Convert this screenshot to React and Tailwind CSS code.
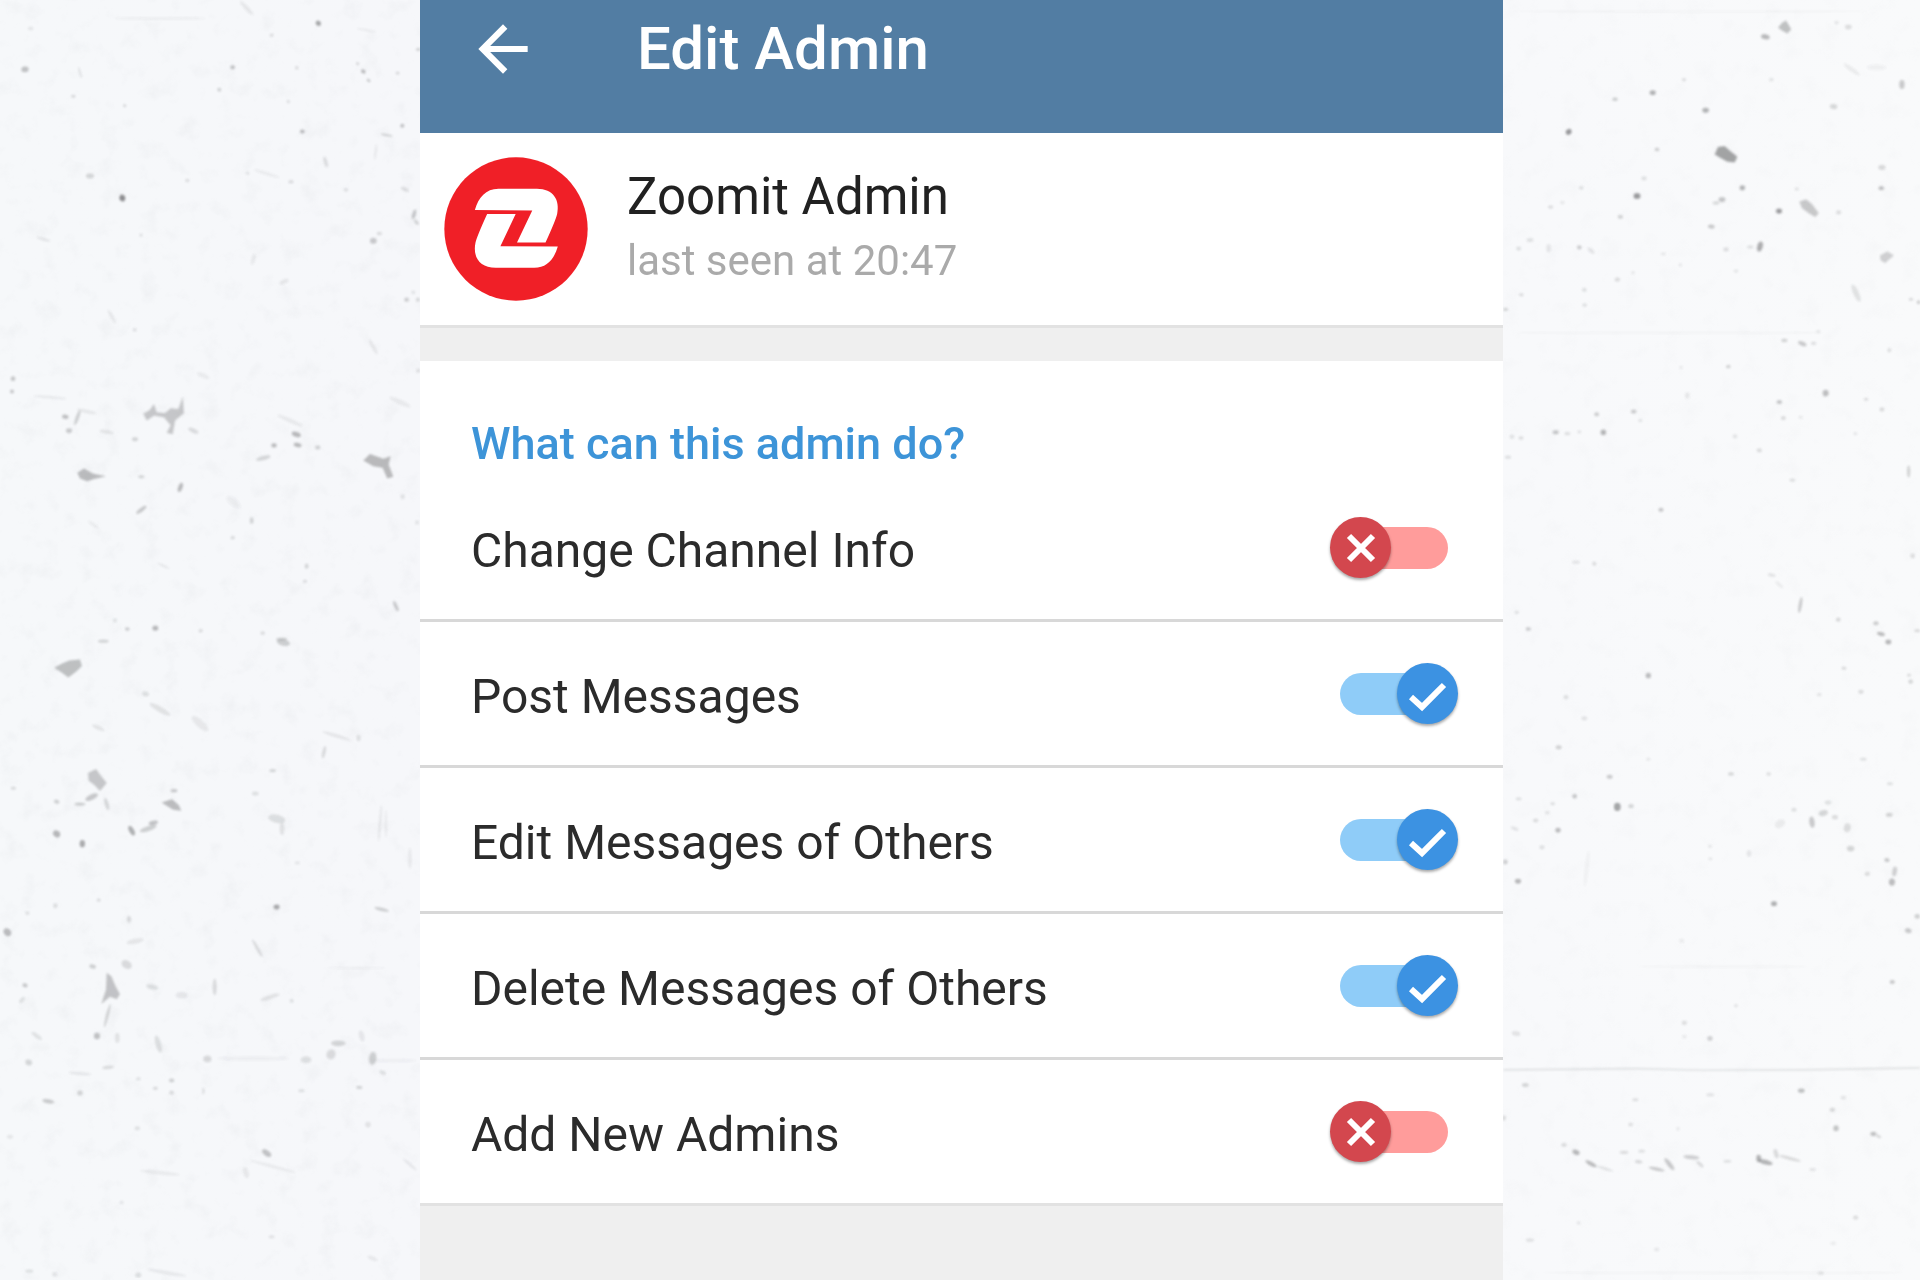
import { useState } from "react";

// Marks on the plaster wall, one list per quarter: [x, y, rx, ry, rotation, opacity]
const WALL = [
  {
    transform: "translate(0 0) scale(0.3333 0.4082)",
    marks: [
      [75, 170, 11, 7, -5, 0.45], [955, 57, 8, 6, 20, 0.7], [698, 165, 7, 5, 0, 0.45], [890, 166, 5, 4, 0, 0.25],
      [658, 220, 6, 5, 0, 0.3], [220, 236, 7, 4, 0, 0.25], [374, 259, 5, 4, 0, 0.25], [1090, 175, 7, 5, 20, 0.5],
      [1106, 197, 6, 4, 20, 0.35], [1193, 179, 6, 4, 0, 0.25], [1073, 156, 5, 4, 0, 0.25], [865, 249, 5, 4, 0, 0.2],
      [907, 322, 7, 5, 0, 0.5], [1207, 308, 6, 5, 0, 0.45], [1160, 331, 18, 3, 8, 0.3], [1255, 121, 7, 4, 0, 0.3],
      [270, 431, 12, 6, 0, 0.3], [367, 485, 9, 8, 20, 0.9], [562, 442, 6, 4, 0, 0.25], [873, 445, 8, 4, 0, 0.25],
      [743, 424, 5, 4, 0, 0.2], [977, 397, 5, 14, -20, 0.25], [1127, 372, 3, 20, 8, 0.15], [1038, 465, 6, 4, 0, 0.25],
      [1215, 464, 12, 4, 20, 0.25], [1242, 525, 5, 12, 20, 0.45], [1249, 544, 9, 4, 40, 0.35], [1120, 590, 10, 7, 0, 0.4],
      [1138, 572, 8, 4, 0, 0.25], [1220, 734, 7, 5, 0, 0.4], [1254, 734, 6, 5, 0, 0.3], [1240, 716, 6, 4, 0, 0.2],
      [423, 576, 5, 4, 0, 0.2], [130, 586, 22, 3, 12, 0.18], [335, 775, 4, 20, -35, 0.15], [404, 808, 5, 4, 0, 0.25],
      [760, 635, 6, 14, 20, 0.12], [852, 690, 14, 5, -20, 0.15], [1120, 850, 5, 22, -35, 0.15], [1255, 908, 5, 5, 0, 0.25],
      [39, 928, 7, 6, 0, 0.4], [36, 959, 6, 5, 0, 0.4], [196, 1021, 10, 5, 5, 0.5], [207, 1055, 9, 6, 0, 0.4],
      [232, 1023, 5, 20, 25, 0.35], [150, 973, 50, 3, 4, 0.14], [320, 1058, 22, 4, 8, 0.18], [260, 1008, 30, 4, 10, 0.15],
      [405, 1076, 9, 5, 0, 0.3], [424, 1168, 9, 4, 0, 0.3], [541, 1194, 6, 12, 25, 0.55], [424, 1249, 18, 5, -30, 0.4],
      [580, 1055, 16, 5, 20, 0.25], [822, 1091, 8, 5, 0, 0.55], [889, 1064, 14, 6, 15, 0.55], [893, 1090, 12, 5, 10, 0.55],
      [953, 1096, 8, 5, 0, 0.35], [790, 1122, 22, 5, -12, 0.3], [755, 1275, 5, 8, 0, 0.35], [698, 1317, 6, 4, 0, 0.3],
      [920, 1387, 6, 6, 0, 0.3], [915, 1424, 6, 4, 0, 0.25], [1188, 1485, 5, 14, -30, 0.4], [1251, 1280, 5, 5, 0, 0.2],
      [382, 1541, 7, 4, 0, 0.4], [466, 1539, 9, 6, 0, 0.55], [602, 1545, 6, 4, 0, 0.25], [345, 1520, 6, 5, 0, 0.2],
      [788, 1551, 7, 4, 0, 0.25], [845, 1566, 16, 4, 0, 0.3], [1208, 1217, 6, 6, 0, 0.2], [280, 1285, 18, 4, 30, 0.1],
      [490, 1386, 20, 3, 20, 0.13], [740, 20, 5, 26, -50, 0.15], [480, 45, 140, 2, 0, 0.13], [815, 86, 6, 4, 0, 0.25],
      [240, 178, 3, 14, -20, 0.18], [92, 70, 8, 5, 0, 0.15], [1100, 74, 30, 3, 8, 0.1], [800, 425, 40, 4, 14, 0.1],
      [610, 920, 20, 6, 20, 0.1], [870, 1030, 40, 5, 20, 0.12], [1200, 985, 34, 6, 20, 0.12], [700, 1230, 24, 10, 30, 0.08],
    ],
    stains: [
      ["M430 1013 L448 1005 L462 990 L470 1010 L495 1012 L512 1000 L535 1002 L548 972 L552 1012 L525 1030 L518 1064 L500 1060 L512 1042 L492 1022 L462 1018 L440 1030Z", 0.42],
      ["M232 1158 L252 1148 L278 1160 L318 1167 L280 1174 L262 1179 L240 1172Z", 0.5],
      ["M1090 1128 L1110 1112 L1150 1124 L1172 1118 L1166 1138 L1180 1168 L1162 1172 L1148 1146 L1120 1142Z", 0.52],
    ],
  },
  {
    transform: "translate(0 640) scale(0.3333 0.4082)",
    marks: [
      [310, 3, 16, 4, 0, 0.3], [850, 6, 20, 8, 10, 0.35], [480, 170, 34, 7, 25, 0.18], [600, 205, 30, 10, 35, 0.13],
      [437, 132, 10, 6, 10, 0.22], [295, 215, 20, 5, 20, 0.15], [1010, 235, 44, 4, 14, 0.15], [1076, 240, 6, 8, 0, 0.2],
      [972, 275, 5, 16, 15, 0.25], [40, 363, 8, 4, 0, 0.25], [170, 396, 8, 5, 10, 0.35], [240, 402, 16, 4, 0, 0.35],
      [275, 385, 20, 7, -20, 0.4], [320, 402, 5, 16, -20, 0.3], [522, 369, 10, 4, 0, 0.4], [395, 467, 7, 14, -35, 0.6],
      [445, 462, 26, 6, -15, 0.35], [460, 448, 14, 5, -10, 0.45], [170, 475, 11, 8, 20, 0.55], [247, 499, 8, 9, 0, 0.65],
      [818, 320, 10, 4, 0, 0.3], [766, 376, 10, 5, 0, 0.2], [830, 438, 26, 10, 10, 0.22], [846, 462, 7, 16, 0, 0.18],
      [1140, 450, 4, 44, 5, 0.13], [1158, 450, 4, 34, 0, 0.1], [1230, 535, 5, 26, 0, 0.12], [892, 546, 8, 4, 0, 0.15],
      [296, 637, 6, 4, 0, 0.25], [166, 651, 6, 6, 0, 0.25], [82, 669, 6, 4, 0, 0.25], [22, 716, 12, 9, 30, 0.5],
      [387, 684, 6, 8, 0, 0.25], [405, 738, 26, 6, -10, 0.15], [830, 654, 9, 6, 0, 0.65], [1145, 660, 22, 4, 12, 0.35],
      [772, 755, 4, 26, -35, 0.25], [644, 850, 6, 20, 0, 0.25], [380, 795, 16, 10, 20, 0.25], [278, 800, 10, 5, 10, 0.35],
      [75, 846, 8, 5, 10, 0.4], [66, 882, 10, 5, -40, 0.2], [457, 850, 18, 6, 10, 0.22], [545, 870, 18, 8, 0, 0.14],
      [810, 875, 30, 5, -15, 0.18], [875, 884, 6, 5, 0, 0.2], [322, 920, 4, 30, 18, 0.32], [291, 970, 9, 8, 0, 0.45],
      [352, 975, 7, 12, 0, 0.18], [475, 990, 8, 22, -20, 0.22], [110, 970, 18, 5, 30, 0.2], [86, 1035, 10, 7, 10, 0.3],
      [622, 1026, 12, 8, 0, 0.28], [918, 1028, 16, 8, 0, 0.22], [1015, 988, 22, 7, 0, 0.3], [993, 1015, 14, 12, -20, 0.25],
      [1118, 1025, 11, 16, 10, 0.35], [1085, 970, 8, 14, -20, 0.14], [1148, 1060, 10, 5, 20, 0.2], [240, 1062, 34, 4, 4, 0.14],
      [324, 1047, 18, 4, -5, 0.25], [145, 1130, 18, 5, 8, 0.4], [240, 1110, 8, 6, 0, 0.3], [415, 1075, 7, 4, 0, 0.2],
      [466, 1098, 7, 4, 0, 0.28], [515, 1079, 8, 5, 0, 0.35], [515, 1109, 7, 5, 0, 0.25], [610, 1105, 4, 8, 0, 0.18],
      [1078, 1096, 9, 4, 0, 0.3], [904, 1104, 9, 4, 0, 0.2], [412, 1196, 8, 5, 0, 0.2], [1104, 1187, 8, 7, 0, 0.18],
      [800, 1257, 15, 7, 28, 0.45], [30, 1217, 9, 5, 0, 0.15], [738, 1305, 8, 14, -20, 0.13], [365, 1378, 6, 4, 0, 0.16],
      [1230, 1285, 24, 4, 35, 0.14], [820, 1290, 70, 4, 12, 0.1], [480, 1305, 60, 5, 5, 0.1], [815, 1462, 9, 4, 0, 0.18],
      [88, 1546, 12, 4, 0, 0.22], [164, 1554, 8, 5, 0, 0.18], [415, 1556, 9, 6, 0, 0.22], [500, 1550, 60, 4, 8, 0.14],
      [1118, 1515, 16, 5, 20, 0.12], [1070, 803, 90, 2, 0, 0.08], [1180, 1030, 70, 4, 0, 0.08], [760, 1025, 110, 5, 0, 0.08],
    ],
    stains: [
      ["M163 68 L185 58 L208 50 L240 48 L246 64 L228 78 L205 92 L186 80Z", 0.48],
      ["M264 326 L288 316 L302 332 L320 350 L300 370 L284 356 L266 344Z", 0.42],
      ["M485 398 L516 390 L536 404 L544 418 L520 416 L500 406Z", 0.5],
      ["M320 815 L334 824 L348 850 L360 868 L350 880 L330 874 L304 892 L318 856Z", 0.44],
    ],
  },
  {
    transform: "translate(1490 0) scale(0.3333 0.4082)",
    marks: [
      [826, 90, 13, 6, 8, 0.55], [1075, 66, 10, 6, 0, 0.25], [1040, 55, 6, 4, 0, 0.18], [582, 195, 6, 4, 0, 0.25],
      [488, 227, 9, 6, 0, 0.6], [375, 243, 8, 5, 0, 0.35], [647, 270, 10, 6, 0, 0.6], [236, 323, 9, 7, -20, 0.8],
      [501, 366, 7, 4, 0, 0.4], [1031, 261, 11, 6, 8, 0.3], [1236, 207, 8, 11, 0, 0.4], [844, 195, 7, 4, 0, 0.2],
      [1176, 410, 11, 6, 0, 0.28], [1174, 461, 8, 5, 0, 0.5], [757, 460, 8, 6, 0, 0.6], [696, 489, 10, 6, 0, 0.45],
      [678, 497, 10, 4, 0, 0.3], [867, 517, 9, 6, 0, 0.8], [920, 463, 6, 4, 0, 0.2], [1046, 520, 8, 5, 0, 0.25],
      [462, 437, 8, 5, 0, 0.22], [441, 480, 10, 7, 0, 0.8], [391, 531, 8, 5, 0, 0.32], [274, 460, 7, 4, 0, 0.22],
      [182, 507, 8, 4, 0, 0.25], [217, 496, 7, 4, 0, 0.15], [664, 555, 10, 5, 5, 0.4], [810, 604, 8, 13, 20, 0.65],
      [781, 605, 10, 4, 0, 0.22], [708, 611, 8, 5, 0, 0.25], [268, 606, 7, 5, 0, 0.38], [120, 588, 10, 5, 0, 0.2],
      [86, 609, 7, 5, 0, 0.22], [176, 608, 7, 10, 0, 0.16], [303, 614, 12, 5, 35, 0.18], [520, 622, 8, 4, 0, 0.15],
      [1098, 718, 8, 24, -30, 0.2], [738, 664, 6, 4, 0, 0.2], [571, 649, 5, 4, 0, 0.16], [382, 685, 8, 5, 0, 0.26],
      [429, 668, 6, 4, 0, 0.15], [283, 710, 7, 5, 0, 0.22], [284, 747, 7, 4, 0, 0.22], [94, 722, 7, 4, 0, 0.24],
      [47, 758, 7, 4, 0, 0.35], [1263, 733, 6, 4, 0, 0.28], [1286, 740, 5, 5, 0, 0.4], [883, 834, 9, 4, 0, 0.35],
      [937, 842, 13, 5, 18, 0.42], [971, 841, 8, 4, 0, 0.25], [985, 812, 6, 3, 0, 0.2], [1198, 858, 6, 5, 0, 0.24],
      [715, 898, 7, 4, 0, 0.35], [573, 900, 5, 4, 0, 0.15], [1007, 963, 9, 8, -10, 0.5], [868, 985, 8, 5, 0, 0.45],
      [880, 1024, 7, 5, 0, 0.28], [932, 1022, 6, 4, 0, 0.15], [1128, 978, 6, 4, 0, 0.25], [1176, 1003, 7, 5, 0, 0.28],
      [592, 969, 7, 8, 0, 0.15], [431, 1008, 8, 5, 0, 0.4], [451, 1030, 6, 4, 0, 0.2], [320, 1015, 7, 5, 0, 0.4],
      [340, 1059, 8, 7, 0, 0.6], [197, 1059, 9, 5, 0, 0.45], [232, 1062, 9, 4, 0, 0.24], [268, 1058, 6, 4, 0, 0.18],
      [66, 1070, 7, 5, 0, 0.22], [93, 1073, 7, 4, 0, 0.26], [54, 1120, 9, 4, 0, 0.22], [735, 1069, 7, 5, 0, 0.2],
      [808, 1103, 8, 5, 0, 0.26], [1096, 1062, 6, 4, 0, 0.16], [1256, 1155, 5, 15, 0, 0.32], [907, 1176, 9, 4, 0, 0.22],
      [513, 1249, 8, 5, 0, 0.4], [1268, 1362, 7, 6, 0, 0.25], [258, 1377, 12, 4, 0, 0.18], [313, 1381, 6, 5, 0, 0.26],
      [845, 1409, 12, 4, 10, 0.18], [868, 1432, 14, 4, 35, 0.12], [931, 1482, 5, 20, 12, 0.38], [1045, 1518, 7, 5, 0, 0.28],
      [1158, 1527, 8, 5, 0, 0.38], [1173, 1553, 12, 5, 10, 0.5], [115, 1541, 8, 5, 0, 0.36], [80, 1500, 6, 4, 0, 0.2],
      [1282, 1545, 9, 4, 0, 0.25], [600, 28, 560, 2, 0, 0.06], [540, 815, 480, 2, 0, 0.07], [1085, 170, 28, 5, 30, 0.13],
      [1160, 165, 30, 7, 0, 0.08],
    ],
    stains: [
      ["M864 68 L876 56 L888 50 L904 72 L892 82 L878 76Z", 0.48],
      ["M674 378 L684 360 L704 358 L724 372 L742 384 L734 398 L712 396 L690 386Z", 0.72],
      ["M928 494 L948 488 L966 500 L986 522 L976 532 L956 522 L936 510Z", 0.42],
      ["M1170 626 L1192 616 L1212 626 L1196 636 L1186 644 L1172 638Z", 0.36],
    ],
  },
  {
    transform: "translate(1490 640) scale(0.3333 0.4082)",
    marks: [
      [1195, 5, 9, 6, 0, 0.55], [475, 87, 8, 7, 0, 0.5], [1062, 69, 7, 4, 0, 0.25], [1262, 102, 7, 5, 0, 0.3],
      [1257, 86, 6, 4, 0, 0.24], [1113, 127, 8, 5, 0, 0.25], [988, 134, 7, 4, 0, 0.18], [228, 140, 7, 5, 0, 0.22],
      [283, 192, 9, 5, 0, 0.18], [206, 263, 9, 5, 0, 0.32], [475, 292, 6, 4, 0, 0.15], [359, 335, 9, 5, 0, 0.38],
      [723, 328, 9, 4, 0, 0.3], [836, 328, 7, 4, 0, 0.24], [1120, 292, 10, 4, 0, 0.2], [254, 383, 7, 6, 0, 0.42],
      [382, 409, 10, 10, 0, 0.7], [423, 407, 8, 5, 0, 0.3], [86, 389, 9, 4, 0, 0.2], [188, 401, 7, 4, 0, 0.22],
      [172, 423, 7, 4, 0, 0.18], [137, 442, 8, 5, 0, 0.24], [74, 462, 12, 4, 20, 0.18], [204, 466, 8, 6, 0, 0.5],
      [156, 508, 8, 5, 0, 0.2], [46, 544, 7, 6, 0, 0.36], [84, 591, 9, 6, 0, 0.55], [912, 416, 8, 5, 0, 0.22],
      [966, 446, 8, 14, -10, 0.4], [1000, 424, 14, 7, -10, 0.3], [1014, 398, 10, 5, 0, 0.2], [1035, 434, 9, 5, 0, 0.25],
      [1072, 460, 10, 11, 20, 0.24], [1082, 511, 11, 7, 0, 0.3], [870, 450, 16, 10, -20, 0.12], [1200, 352, 9, 4, 0, 0.2],
      [1198, 428, 10, 5, 0, 0.32], [1191, 539, 8, 5, 10, 0.4], [1214, 567, 7, 12, 15, 0.34], [1206, 593, 9, 9, 0, 0.5],
      [1132, 573, 8, 5, 0, 0.26], [777, 523, 7, 8, 0, 0.16], [660, 505, 6, 4, 0, 0.15], [661, 536, 6, 4, 0, 0.15],
      [852, 646, 9, 6, 0, 0.62], [1282, 677, 8, 6, 0, 0.35], [1255, 712, 10, 6, 10, 0.4], [1207, 838, 8, 5, 0, 0.4],
      [575, 737, 8, 5, 0, 0.12], [290, 560, 6, 44, 8, 0.07], [583, 938, 8, 5, 0, 0.24], [660, 976, 8, 6, 0, 0.34],
      [738, 896, 6, 4, 0, 0.18], [583, 972, 7, 4, 0, 0.15], [78, 964, 13, 6, 8, 0.18], [106, 1090, 10, 5, 0, 0.3],
      [436, 1126, 9, 4, 0, 0.22], [661, 1114, 12, 4, 0, 0.18], [422, 1187, 7, 4, 0, 0.26], [934, 1104, 10, 5, 0, 0.48],
      [1060, 1121, 8, 5, 0, 0.18], [1027, 1151, 8, 5, 0, 0.3], [1038, 1196, 8, 7, 0, 0.46], [1150, 1210, 9, 5, 0, 0.5],
      [1166, 1216, 8, 3, 20, 0.34], [42, 1171, 6, 6, 0, 0.25], [222, 1237, 8, 5, 0, 0.25], [258, 1255, 11, 6, 18, 0.55],
      [303, 1283, 18, 5, 24, 0.52], [345, 1295, 26, 3, 14, 0.2], [402, 1255, 13, 4, 0, 0.24], [446, 1278, 11, 4, 5, 0.28],
      [455, 1252, 10, 4, 0, 0.2], [500, 1296, 24, 4, 10, 0.4], [538, 1284, 6, 20, -45, 0.42], [604, 1267, 24, 5, 4, 0.36],
      [630, 1284, 12, 4, 35, 0.28], [712, 1277, 12, 4, 0, 0.2], [806, 1270, 7, 9, 0, 0.6], [826, 1279, 22, 6, 12, 0.58],
      [858, 1258, 6, 12, -20, 0.28], [900, 1270, 34, 4, 12, 0.26], [968, 1297, 10, 4, 0, 0.18], [564, 1197, 6, 4, 0, 0.15],
      [1097, 1415, 8, 5, 0, 0.24], [266, 1428, 6, 4, 0, 0.18], [120, 1470, 12, 4, 0, 0.22], [500, 1493, 8, 5, 0, 0.14],
      [1030, 1478, 9, 4, 0, 0.12], [992, 1551, 9, 4, 0, 0.2], [700, 1550, 560, 2, 0, 0.07], [700, 800, 260, 2, 0, 0.07],
    ],
    stains: [
      ["M40 1051 L440 1048 L640 1052 L940 1051 L1290 1046 L1290 1050 L940 1055 L640 1056 L440 1052 L40 1055Z", 0.2],
    ],
  },
];

function Wall() {
  return (
    <svg
      className="absolute inset-0 -z-10 h-full w-full"
      viewBox="0 0 1920 1280"
      preserveAspectRatio="xMidYMid slice"
      aria-hidden="true"
    >
      <defs>
        <linearGradient id="plaster" x1="0" x2="1" y1="0" y2="0">
          <stop offset="0" stopColor="#f6f8fa" />
          <stop offset="0.22" stopColor="#f6f7fa" />
          <stop offset="0.8" stopColor="#f8f9fb" />
          <stop offset="1" stopColor="#f9fafb" />
        </linearGradient>
        <filter id="soft" x="0" y="0" width="100%" height="100%">
          <feGaussianBlur stdDeviation="1" />
        </filter>
        <filter id="relief" x="0" y="0" width="100%" height="100%">
          <feTurbulence type="fractalNoise" baseFrequency="0.05" numOctaves="4" seed="8" />
          <feColorMatrix values="0 0 0 0 0.6  0 0 0 0 0.62  0 0 0 0 0.65  1.6 0 0 0 -0.86" />
        </filter>
      </defs>
      <rect width="1920" height="1280" fill="url(#plaster)" />
      <rect width="430" height="1280" filter="url(#relief)" opacity="0.22" />
      <rect x="1490" width="430" height="1280" filter="url(#relief)" opacity="0.1" />
      <g filter="url(#soft)" fill="#6b6c6e" opacity="0.85">
        {WALL.map((part) => (
          <g key={part.transform} transform={part.transform}>
            {part.marks.map(([x, y, rx, ry, turn, opacity], i) => (
              <ellipse key={i} cx={x} cy={y} rx={rx} ry={ry} opacity={opacity} transform={`rotate(${turn} ${x} ${y})`} />
            ))}
            {part.stains.map(([d, opacity]) => (
              <path key={d} d={d} opacity={opacity} />
            ))}
          </g>
        ))}
      </g>
    </svg>
  );
}

function Avatar() {
  return (
    <svg className="size-36 shrink-0" viewBox="42 36 434 434" role="img" aria-label="Zoomit">
      <circle cx="259" cy="253" r="216" fill="#f01f27" />
      <g fill="#fff">
        <path d="M135 196 C146 158 168 132 206 132 H322 C372 132 392 166 383 208 Q379 226 348 294 H262 L308 197Z" />
        <path d="M385 306 C374 344 352 370 314 370 H198 C148 370 128 336 137 294 Q141 276 172 208 H258 L212 305Z" />
      </g>
    </svg>
  );
}

function Toggle({ id, checked, onChange }) {
  return (
    <span className="relative flex h-[62px] w-32 shrink-0 items-center">
      <input
        id={id}
        type="checkbox"
        role="switch"
        checked={checked}
        onChange={onChange}
        className="peer absolute inset-0 z-10 m-0 cursor-pointer appearance-none opacity-0"
      />
      <span
        className={
          checked
            ? "mx-[10px] h-[42px] w-full rounded-full bg-[#8fccf8]"
            : "mx-[10px] h-[42px] w-full rounded-full bg-[#ff9c9b]"
        }
      />
      <span
        className={
          checked
            ? "absolute right-0 flex size-[61px] items-center justify-center rounded-full bg-[#3c92e2] shadow-[0_2px_3px_rgba(0,0,0,0.35)]"
            : "absolute left-0 flex size-[61px] items-center justify-center rounded-full bg-[#d3474e] shadow-[0_2px_3px_rgba(0,0,0,0.35)]"
        }
      >
        <svg className="size-full" viewBox="0 0 61 61" fill="none" stroke="#fff" strokeWidth="6" aria-hidden="true">
          {checked ? <path d="M14 34 L25 44 L47 22" /> : <path d="M19 19 L43 43 M43 19 L19 43" />}
        </svg>
      </span>
    </span>
  );
}

const RIGHTS = [
  { id: "info", label: "Change Channel Info", on: false },
  { id: "post", label: "Post Messages", on: true },
  { id: "edit", label: "Edit Messages of Others", on: true },
  { id: "delete", label: "Delete Messages of Others", on: true },
  { id: "add", label: "Add New Admins", on: false },
];

export default function App() {
  const [rights, setRights] = useState(RIGHTS);
  const flip = (id) => setRights(rights.map((r) => (r.id === id ? { ...r, on: !r.on } : r)));

  return (
    <div className="relative isolate flex min-h-screen justify-center overflow-hidden pl-[3px] font-['Roboto',sans-serif]">
      <Wall />
      <main className="flex w-[56.5%] flex-col bg-[#efefef]">
        <header className="flex items-center gap-[97px] bg-[#527da3] pt-3 pb-[47px] pl-[46px] text-white">
          <button type="button" aria-label="Back" className="shrink-0 cursor-pointer">
            <svg className="size-[74px]" viewBox="0 0 24 24" fill="currentColor" aria-hidden="true">
              <path d="M20 11H7.83l5.59-5.59L12 4l-8 8 8 8 1.41-1.41L7.83 13H20v-2z" />
            </svg>
          </button>
          <h1 className="text-[60px] leading-[74px] font-medium">Edit Admin</h1>
        </header>

        <section className="flex items-center gap-[39px] border-b-[3px] border-[#e2e2e2] bg-white pt-6 pb-6 pl-6">
          <Avatar />
          <div>
            <p className="text-[51px] leading-[64px] text-[#212121]">Zoomit Admin</p>
            <p className="text-[42px] leading-[64px] text-[#aaaaaa]">last seen at 20:47</p>
          </div>
        </section>

        <section className="mt-[33px] bg-white pt-[51px]">
          <h2 className="pl-[51px] text-[45px] leading-[64px] font-medium text-[#3d94d8]">What can this admin do?</h2>
          <ul>
            {rights.map((r) => (
              <li
                key={r.id}
                className="flex h-[146px] items-center justify-between border-b-[3px] border-[#d8d8d8] pr-[45px] pl-[51px] last:border-[#e2e2e2]"
              >
                <label htmlFor={r.id} className="pt-[6px] text-[48px] leading-[64px] text-[#2b2b2b]">
                  {r.label}
                </label>
                <Toggle id={r.id} checked={r.on} onChange={() => flip(r.id)} />
              </li>
            ))}
          </ul>
        </section>
      </main>
    </div>
  );
}
